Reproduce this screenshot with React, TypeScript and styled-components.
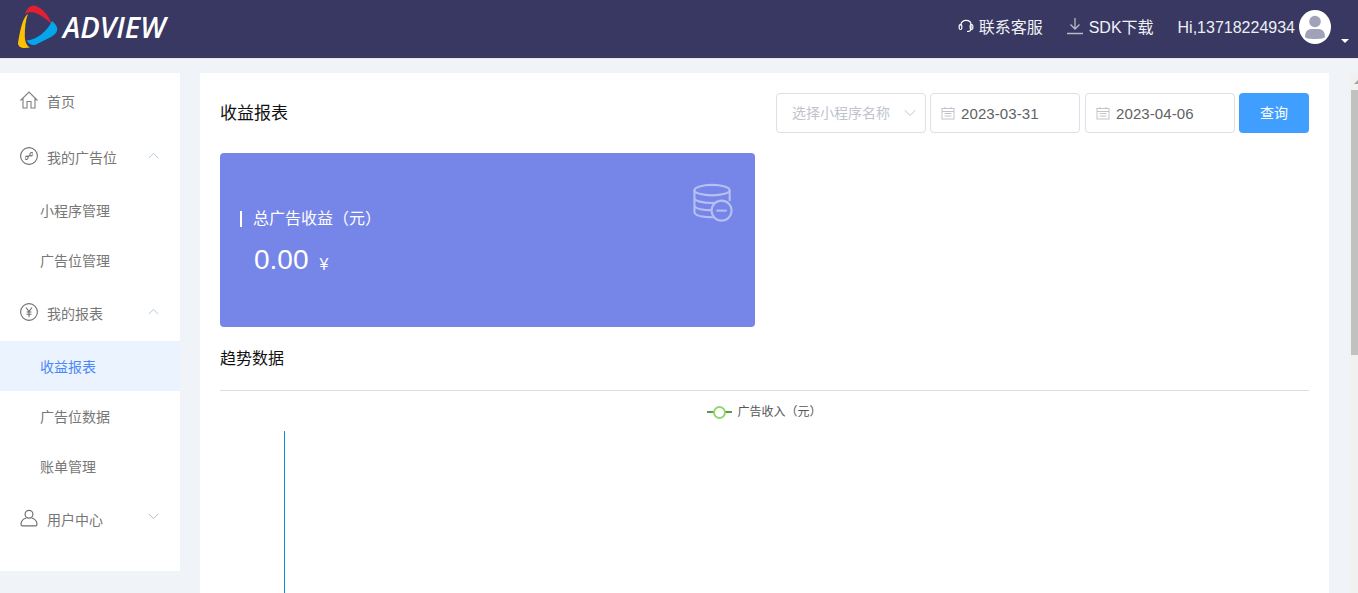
import styled, { createGlobalStyle } from "styled-components";
import { ChevronDown, ChevronUp } from "lucide-react";

const GlobalStyle = createGlobalStyle`
  html, body {
    margin: 0;
    height: 100%;
    overflow: hidden;
    background: #f0f4f9;
    font-family: "Liberation Sans", "Noto Sans CJK SC", sans-serif;
  }
`;

const Logo = () => (
  <LogoMark viewBox="15 3 45 47" aria-hidden="true">
    <path d="M25 14C27 8 31 4 36 6C43 9 49 15 52 25C49 21 44 17 38 14C33 11.5 28 12 25 14Z" fill="#e2202f" />
    <path d="M28 14C23 17 20.5 28 18 43C18 47 22 49 30 47.5C26.5 45.5 25 42 24.8 36C24.8 28 25.5 20 28 14Z" fill="#fcc200" />
    <path d="M26.5 40.5C36 40 47 32 52 21C56 24 58 28 57 31C56 34 53 36 50 37.5L36 44.5C32 46 29 44 26.5 40.5Z" fill="#04a5ea" />
  </LogoMark>
);

const HomeIcon = () => (
  <MenuSvg viewBox="0 0 18 18" fill="none" stroke="#808080" strokeWidth="1.1">
    <path d="M.5 9.5 9 1 17.5 9.5M3 7.5V17H7V10.5H11V17H15V7.5" />
  </MenuSvg>
);

const LinkIcon = () => (
  <MenuSvg viewBox="0 0 18 18" fill="none" stroke="#707070" strokeWidth="1.1">
    <circle cx="9" cy="9" r="8.4" />
    <path d="M5.5 10.5C5.5 9 7.5 8.5 8 10C8.5 12 6 13.5 5.2 11.5M12.5 7.5C12.5 9 10.5 9.5 10 8C9.5 6 12 4.5 12.8 6.5M8 10 10 8" />
  </MenuSvg>
);

const YuanIcon = () => (
  <MenuSvg viewBox="0 0 18 18" fill="none" stroke="#707070" strokeWidth="1.1">
    <circle cx="9" cy="9" r="8.4" />
    <path d="M6 4.5 9 8.5 12 4.5M9 8.5V14M6.5 9H11.5M6.5 11.2H11.5" />
  </MenuSvg>
);

const UserIcon = () => (
  <MenuSvg viewBox="0 0 18 18" fill="none" stroke="#707070" strokeWidth="1.2">
    <circle cx="9" cy="5.2" r="3.9" />
    <path d="M6.3 9C3 10 1.2 12 1 15C1 16.2 1.5 16.9 2.5 16.9H15.5C16.5 16.9 17 16.2 17 15C16.8 12 15 10 11.7 9" />
  </MenuSvg>
);

const CalendarIcon = () => (
  <svg width="14" height="14" viewBox="0 0 14 14" fill="none" stroke="#c0c4cc" strokeWidth="1">
    <rect x="1" y="2.5" width="12" height="10.5" />
    <path d="M1 5.5H13M4 1V3M10 1V3M3.5 7.5H10.5M3.5 10H10.5" />
  </svg>
);

const sideMenu = [
  { label: "首页", icon: <HomeIcon /> },
  { label: "我的广告位", icon: <LinkIcon />, open: true, sub: ["小程序管理", "广告位管理"] },
  { label: "我的报表", icon: <YuanIcon />, open: true, sub: ["收益报表", "广告位数据", "账单管理"] },
  { label: "用户中心", icon: <UserIcon />, open: false },
];

export default function App() {
  return (
    <Page>
      <GlobalStyle />
      <Header>
        <Brand>
          <Logo />
          <BrandName>ADVIEW</BrandName>
        </Brand>
        <HeaderLink>
          <svg width="16" height="16" viewBox="0 0 16 16" fill="none" stroke="#fff" strokeWidth="1.2">
            <path d="M3 8V6.5C3 1 13 1 13 6.5V11C13 13 11 13.5 9 13.5" />
            <rect x="1.2" y="6.5" width="2.6" height="5" rx="1.2" />
            <rect x="12.2" y="6.5" width="2.6" height="5" rx="1.2" />
          </svg>
          联系客服
        </HeaderLink>
        <DownloadLink>
          <svg width="18" height="18" viewBox="0 0 18 18" fill="none" stroke="#b9b9c8" strokeWidth="1.3">
            <path d="M9 1V12M4.5 7.5 9 12 13.5 7.5M1 16.5H17" />
          </svg>
          SDK下载
        </DownloadLink>
        <Greeting>Hi,13718224934</Greeting>
        <Avatar>
          <svg width="32" height="34" viewBox="0 0 32 34" fill="#a1a1ba">
            <circle cx="16" cy="11.5" r="5.8" />
            <path d="M6 27C6 21 9 19 13 19H19C23 19 26 21 26 27C26 28 22 29 16 29C10 29 6 28 6 27Z" />
          </svg>
        </Avatar>
        <Caret />
      </Header>

      <Body>
        <Sidebar>
          {sideMenu.map((item) => (
            <div key={item.label}>
              <MenuRow>
                {item.icon}
                <MenuLabel>{item.label}</MenuLabel>
                {item.open === true && <UpArrow size={17} strokeWidth={1.2} />}
                {item.open === false && <DownArrow size={17} strokeWidth={1.2} />}
              </MenuRow>
              {item.sub?.map((s) => (
                <SubRow key={s} $active={s === "收益报表"}>
                  {s}
                </SubRow>
              ))}
            </div>
          ))}
        </Sidebar>

        <Main>
          <TopRow>
            <PageTitle>收益报表</PageTitle>
            <Filters>
              <SelectBox>
                <SelectText>选择小程序名称</SelectText>
                <ChevronDown size={20} color="#b4b8c0" strokeWidth={1} />
              </SelectBox>
              <DateBox>
                <CalendarIcon />
                2023-03-31
              </DateBox>
              <DateBox>
                <CalendarIcon />
                2023-04-06
              </DateBox>
              <QueryButton>查询</QueryButton>
            </Filters>
          </TopRow>

          <StatCard>
            <StatLabel>总广告收益（元）</StatLabel>
            <StatValue>
              0.00<StatUnit>¥</StatUnit>
            </StatValue>
            <StatIcon viewBox="0 0 42 42" fill="none" stroke="#b7bff0" strokeWidth="2.2">
              <ellipse cx="20" cy="7.5" rx="18.5" ry="5.5" />
              <path d="M1.5 7.5V30.5C1.5 34 9 36 23 36M38.5 7.5V19M1.5 15.5C1.5 19 10 21 20 21C23 21 26 20.8 28 20.3M1.5 23C1.5 26.5 9 28.5 22 28.5" />
              <circle cx="30" cy="29" r="10.5" fill="#7685e8" />
              <path d="M24.5 29H35.5" />
            </StatIcon>
          </StatCard>

          <TrendTitle>趋势数据</TrendTitle>
          <Legend>
            <LegendMark>
              <LegendDot />
            </LegendMark>
            广告收入（元）
          </Legend>
          <ChartAxis />
        </Main>

        <ScrollTrack>
          <ScrollArrow />
          <ScrollThumb />
        </ScrollTrack>
      </Body>
    </Page>
  );
}

const Page = styled.div`
  width: 1358px;
  height: 593px;
  overflow: hidden;
  display: flex;
  flex-direction: column;
  background: #f0f4f9;
`;

const Header = styled.header`
  height: 59px;
  flex: none;
  display: flex;
  align-items: center;
  background: #383862;
  color: #fff;
  font-size: 16px;
  border-bottom: 1px solid #e6e6ea;
  box-sizing: border-box;
  padding-bottom: 6px;
`;

const Brand = styled.div`
  display: flex;
  align-items: center;
  margin: 1px auto 0 15px;
`;

const LogoMark = styled.svg`
  width: 45px;
  height: 47px;
`;

const BrandName = styled.span`
  font-family: "Open Sans", "Liberation Sans", sans-serif;
  font-style: italic;
  font-size: 29px;
  font-weight: 600;
  margin-left: 3px;
`;

const HeaderLink = styled.span`
  display: flex;
  align-items: center;
  gap: 5px;
  margin-right: 23px;
  white-space: nowrap;
  color: #f1f1f5;
`;

const DownloadLink = styled(HeaderLink)`
  margin-right: 24px;
`;

const Greeting = styled.span`
  padding-top: 3px;
  color: #eeeef4;
  white-space: nowrap;
`;

const Avatar = styled.span`
  width: 32px;
  height: 34px;
  margin: 1px 0 0 4px;
  border-radius: 50%;
  background: #fff;
  display: flex;
  overflow: hidden;
`;

const Caret = styled.span`
  width: 0;
  height: 0;
  margin: 30px 9px 0 10px;
  border: 4px solid transparent;
  border-top: 4px solid #fff;
  border-bottom: 0;
`;

const Body = styled.div`
  flex: 1;
  display: flex;
  align-items: flex-start;
  padding-top: 14px;
  min-height: 0;
`;

const Sidebar = styled.nav`
  width: 180px;
  height: 498px;
  flex: none;
  background: #fff;
`;

const MenuRow = styled.div`
  height: 56px;
  display: flex;
  align-items: center;
  padding: 0 18px 0 20px;
  font-size: 14px;
  color: #777;
`;

const MenuSvg = styled.svg`
  width: 18px;
  height: 18px;
  flex: none;
  margin-top: -3px;
`;

const MenuLabel = styled.span`
  margin-left: 9px;
  flex: 1;
`;

const UpArrow = styled(ChevronUp)`
  color: #a3c0d6;
  margin-top: -3px;
`;

const DownArrow = styled(ChevronDown)`
  color: #b5a9a9;
  margin-top: -5px;
`;

const SubRow = styled.div<{ $active?: boolean }>`
  height: 50px;
  line-height: 52px;
  padding-left: 40px;
  font-size: 14px;
  color: ${(p) => (p.$active ? "#4b88f7" : "#777")};
  background: ${(p) => (p.$active ? "#ebf3fe" : "transparent")};
`;

const Main = styled.main`
  width: 1129px;
  height: 520px;
  flex: none;
  margin-left: 20px;
  box-sizing: border-box;
  padding: 20px 20px 0;
  background: #fff;
`;

const TopRow = styled.div`
  display: flex;
  align-items: center;
  justify-content: space-between;
  height: 40px;
`;

const PageTitle = styled.h2`
  margin: 0;
  padding-bottom: 4px;
  font-size: 17px;
  font-weight: 400;
  color: #111;
`;

const Filters = styled.div`
  display: flex;
  gap: 4px;
`;

const Field = styled.div`
  height: 40px;
  box-sizing: border-box;
  display: flex;
  align-items: center;
  border: 1px solid #dcdfe6;
  border-radius: 4px;
  background: #fff;
`;

const SelectBox = styled(Field)`
  width: 150px;
  padding: 0 5px 0 15px;
  justify-content: space-between;
  color: #c0c4cc;
  font-size: 14px;
`;

const SelectText = styled.span`
  padding-bottom: 2px;
`;

const DateBox = styled(Field)`
  width: 150px;
  padding-left: 10px;
  gap: 6px;
  color: #606266;
  font-size: 15px;
  letter-spacing: 0.1px;
  & + & {
    margin-left: 1px;
  }
`;

const QueryButton = styled.button`
  width: 70px;
  height: 40px;
  border: 0;
  border-radius: 4px;
  padding: 0 0 2px;
  background: #409eff;
  color: #fff;
  font: inherit;
  font-size: 14px;
`;

const StatCard = styled.section`
  position: relative;
  width: 535px;
  height: 174px;
  margin-top: 20px;
  box-sizing: border-box;
  padding: 58px 0 0 20px;
  background: #7685e8;
  border-radius: 4px;
  color: #fff;
`;

const StatLabel = styled.div`
  border-left: 2px solid #fff;
  height: 16px;
  line-height: 16px;
  padding-left: 11px;
  font-size: 16px;
`;

const StatValue = styled.div`
  margin: 16px 0 0 14px;
  font-size: 28px;
  line-height: 34px;
`;

const StatUnit = styled.span`
  margin-left: 11px;
  font-size: 16px;
  vertical-align: -1px;
`;

const StatIcon = styled.svg`
  position: absolute;
  top: 30px;
  right: 22px;
  width: 40px;
  height: 40px;
`;

const TrendTitle = styled.h3`
  margin: 0;
  height: 64px;
  box-sizing: border-box;
  padding-top: 22px;
  font-size: 16px;
  line-height: 20px;
  font-weight: 400;
  color: #111;
  border-bottom: 1px solid #dcdce0;
`;

const Legend = styled.div`
  height: 40px;
  display: flex;
  justify-content: center;
  align-items: flex-start;
  gap: 5px;
  padding: 14px 0 0;
  box-sizing: border-box;
  font-size: 12px;
  line-height: 14px;
  color: #555;
`;

const LegendMark = styled.span`
  position: relative;
  width: 25px;
  height: 2px;
  margin-top: 6px;
  background: #5f9a4a;
`;

const LegendDot = styled.span`
  position: absolute;
  left: 6px;
  top: -5px;
  width: 13px;
  height: 13px;
  box-sizing: border-box;
  border-radius: 50%;
  border: 2px solid #8ed86f;
  background: #fff;
`;

const ChartAxis = styled.div`
  width: 1px;
  height: 170px;
  margin-left: 64px;
  background: #0a8ed8;
`;

const ScrollTrack = styled.div`
  width: 9px;
  height: 520px;
  margin-left: 20px;
  background: #f1f1f1;
  display: flex;
  flex-direction: column;
  align-items: flex-end;
`;

const ScrollArrow = styled.span`
  width: 0;
  height: 0;
  margin: 7px 0 4px;
  border-left: 4px solid transparent;
  border-bottom: 4px solid #a3a3a3;
`;

const ScrollThumb = styled.span`
  width: 7px;
  height: 265px;
  margin-top: 2px;
  background: #c1c1c1;
`;
